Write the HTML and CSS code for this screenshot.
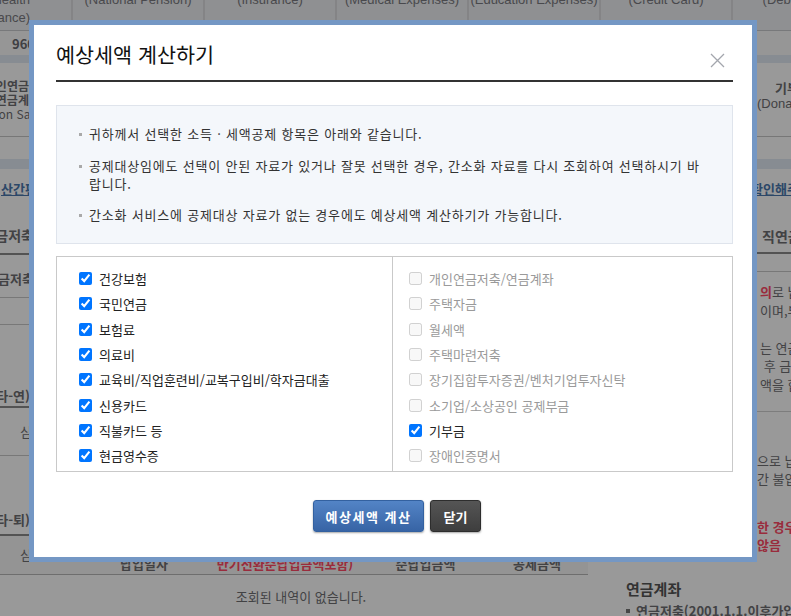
FILE: index.html
```html
<!DOCTYPE html>
<html lang="ko">
<head>
<meta charset="utf-8">
<title>예상세액 계산하기</title>
<link rel="stylesheet" href="styles.css">
</head>
<body>
<div class="page">
  <div class="sumtable">
    <div class="th first"><span>건강보험</span><span>(National Health</span><span>Insurance)</span></div>
    <div class="th">국민연금<br>(National Pension)</div>
    <div class="th">보험료<br>(Insurance)</div>
    <div class="th">의료비<br>(Medical Expenses)</div>
    <div class="th">교육비<br>(Education Expenses)</div>
    <div class="th">신용카드<br>(Credit Card)</div>
    <div class="th last">직불카드<br>(Debit Card)</div>
    <div class="td first">960,000</div>
    <div class="td">0</div>
    <div class="td">0</div>
    <div class="td">0</div>
    <div class="td">0</div>
    <div class="td">0</div>
    <div class="td last">0</div>
  </div>
  <div class="band"></div>
  <div class="subhead">
    <div class="sh-left"><span class="b">개인연금저</span><span class="b">연금계좌</span><span>(Pension Savi</span></div>
    <div class="sh-right"><span class="b k">기부금</span><span>(Donation)</span></div>
  </div>
  <div class="gapwhite"></div>
  <div class="band2"></div>
  <div class="linkrow">
    <a class="lk-left">산간편</a>
    <a class="lk-right">확인해주세요</a>
  </div>
  <div class="main">
    <div class="lcol">
      <div class="l-title"><span>개인연금저축</span></div>
      <div class="l-row1"><span>개인연금저축</span></div>
      <div class="l-row2"></div>
      <div class="l-title2"><span>(기타-연</span></div>
      <div class="l-row3"><span class="sm">심</span></div>
      <div class="l-title3"><span>(기타-퇴</span></div>
      <div class="l-row4">
        <span class="c1">심</span>
        <span class="c2">납입일자</span>
        <span class="c3 red">반기전환순납입금액포함)</span>
        <span class="c4">순납입금액</span>
        <span class="c5">공제금액</span>
      </div>
      <div class="empty">조회된 내역이 없습니다.</div>
    </div>
    <div class="rcol">
      <div class="r-title">직연금</div>
      <div class="r-row"></div>
      <div class="r-text"><span class="red">의</span>로 납입한 금액<br>이며,부담금<br><br>는 연금계좌<br>&nbsp;후 금액<br>액을 합산</div>
      <div class="r-text2">으로 납입<br>간 불입액</div>
      <div class="r-text3"><span class="red">한 경우</span><br><span class="red">않음</span></div>
      <div class="r-sec">연금계좌</div>
      <div class="r-bul">연금저축(2001.1.1.이후가입</div>
    </div>
  </div>
</div>

<div class="overlay"></div>

<div class="modal" role="dialog">
  <div class="modal-head">
    <h1 class="modal-title">예상세액 계산하기</h1>
    <span class="close" aria-label="닫기">
      <svg width="15" height="15" viewBox="0 0 15 15"><path d="M1 1L14 14M14 1L1 14" stroke="#a3a6ad" stroke-width="1.3" fill="none"/></svg>
    </span>
  </div>
  <div class="info">
    <ul>
      <li>귀하께서 선택한 소득 · 세액공제 항목은 아래와 같습니다.</li>
      <li>공제대상임에도 선택이 안된 자료가 있거나 잘못 선택한 경우, 간소화 자료를 다시 조회하여 선택하시기 바랍니다.</li>
      <li>간소화 서비스에 공제대상 자료가 없는 경우에도 예상세액 계산하기가 가능합니다.</li>
    </ul>
  </div>
  <div class="checks">
    <div class="col col-left">
      <label class="row"><input type="checkbox" checked>건강보험</label>
      <label class="row"><input type="checkbox" checked>국민연금</label>
      <label class="row"><input type="checkbox" checked>보험료</label>
      <label class="row"><input type="checkbox" checked>의료비</label>
      <label class="row"><input type="checkbox" checked>교육비/직업훈련비/교복구입비/학자금대출</label>
      <label class="row"><input type="checkbox" checked>신용카드</label>
      <label class="row"><input type="checkbox" checked>직불카드 등</label>
      <label class="row"><input type="checkbox" checked>현금영수증</label>
    </div>
    <div class="col col-right">
      <label class="row off"><input type="checkbox" disabled>개인연금저축/연금계좌</label>
      <label class="row off"><input type="checkbox" disabled>주택자금</label>
      <label class="row off"><input type="checkbox" disabled>월세액</label>
      <label class="row off"><input type="checkbox" disabled>주택마련저축</label>
      <label class="row off"><input type="checkbox" disabled>장기집합투자증권/벤처기업투자신탁</label>
      <label class="row off"><input type="checkbox" disabled>소기업/소상공인 공제부금</label>
      <label class="row"><input type="checkbox" checked>기부금</label>
      <label class="row off"><input type="checkbox" disabled>장애인증명서</label>
    </div>
  </div>
  <div class="buttons">
    <button class="btn btn-blue">예상세액 계산</button>
    <button class="btn btn-dark">닫기</button>
  </div>
</div>
</body>
</html>
```

FILE: styles.css
```css
* { box-sizing: border-box; }
html, body { margin: 0; padding: 0; }
body {
  width: 791px;
  height: 616px;
  overflow: hidden;
  background: #fff;
  font-family: "Noto Sans CJK KR", "Noto Sans", sans-serif;
  font-size: 13px;
  color: #6e6e72;
}

/* ---------- background page ---------- */
.page { width: 791px; overflow: hidden; }
.sumtable {
  display: grid;
  grid-template-columns: 73px repeat(6, 132px);
  margin-top: -27px;
}
.th {
  height: 58px;
  background: #eef0f3;
  border-right: 2px solid #dcdde0;
  border-bottom: 1px solid #c9cacd;
  text-align: center;
  font-family: "Liberation Sans", "Noto Sans CJK KR", sans-serif;
  font-size: 13px;
  line-height: 18px;
  color: #7a7a80;
  white-space: nowrap;
  overflow: hidden;
}
.th.first { display: flex; flex-direction: column; align-items: flex-end; padding-right: 41px; }
.th.first span { display: block; }
.td {
  height: 24px;
  background: #fbfbfb;
  border-right: 1px solid #e2e2e2;
  text-align: center;
  font-weight: bold;
  line-height: 26px;
  color: #6a6a70;
}
.td.first { text-align: left; padding-left: 12px; }
.band { height: 8px; background: #e2e9f4; }
.subhead {
  display: flex;
  justify-content: space-between;
  height: 74px;
  border-bottom: 1px solid #c6c6c6;
  background: #fff;
}
.sh-left {
  width: 40px;
  padding-top: 16px;
  display: flex;
  flex-direction: column;
  align-items: flex-end;
  overflow: hidden;
  white-space: nowrap;
  font-size: 12px;
  line-height: 14px;
}
.sh-left span { display: block; }
.b { font-weight: bold; }
.sh-right {
  width: 34px;
  padding-top: 17px;
  display: flex;
  flex-direction: column;
  white-space: nowrap;
  overflow: hidden;
  line-height: 16px;
  font-family: "Liberation Sans", "Noto Sans CJK KR", sans-serif;
}
.sh-right span { display: block; }
.sh-right .k { padding-left: 18px; font-family: "Noto Sans CJK KR", sans-serif; }
.gapwhite { height: 22px; }
.band2 { height: 10px; background: #e2e9f4; }
.linkrow {
  display: flex;
  justify-content: space-between;
  height: 40px;
  padding-top: 11px;
  font-weight: bold;
  line-height: 18px;
}
.linkrow a { color: #4a77ad; text-decoration: underline; }
.lk-left { padding-left: 1px; }
.lk-right { width: 36px; overflow: hidden; white-space: nowrap; direction: ltr; text-indent: -4px; }

.main {
  display: grid;
  grid-template-columns: 588px 191px;
  column-gap: 12px;
}
.lcol { display: flex; flex-direction: column; }
.lcol > div > span { display: block; }
.l-title, .l-row1, .l-title2, .l-row3, .l-title3 {
  display: flex;
  align-items: flex-end;
  font-weight: bold;
  white-space: nowrap;
  overflow: hidden;
}
.l-title { height: 46px; border-bottom: 2px solid #8a8a8a; padding-bottom: 8px; font-size: 14px; }
.l-title span, .l-row1 span { width: 34px; overflow: hidden; direction: rtl; text-align: left; }
.l-title2 span, .l-title3 span { width: 30px; overflow: hidden; direction: rtl; text-align: left; }
.l-row1 { height: 43px; border-bottom: 1px solid #c9c9c9; padding-bottom: 9px; }
.l-row2 { height: 27px; border-bottom: 1px solid #c9c9c9; }
.l-title2 { height: 83px; border-bottom: 2px solid #8a8a8a; padding-bottom: 1px; }
.l-row3 { height: 48px; border-bottom: 1px solid #c9c9c9; align-items: center; font-weight: normal; }
.sm { padding-left: 20px; }
.l-title3 { height: 80px; border-bottom: 2px solid #8a8a8a; padding-bottom: 5px; }
.l-row4 {
  display: grid;
  grid-template-columns: 83px 122px 160px 121px 1fr;
  height: 39px;
  background: #f7f7f7;
  border-bottom: 1px solid #b8b8b8;
  align-items: end;
  font-weight: bold;
  line-height: 18px;
  padding-bottom: 1px;
}
.l-row4 span { text-align: center; }
.l-row4 .c1 { text-align: left; padding-left: 20px; align-self: center; font-weight: normal; }
.red { color: #ff4a66; }
.empty { padding: 13px 0 0 14px; text-align: center; line-height: 18px; }

.rcol { display: flex; flex-direction: column; }
.r-title {
  height: 45px;
  border-bottom: 2px solid #8a8a8a;
  padding: 17px 0 0 162px;
  font-weight: bold;
  font-size: 14px;
  white-space: nowrap;
  line-height: 20px;
}
.r-row { height: 18px; border-bottom: 1px solid #c9c9c9; }
.r-text {
  padding: 11px 0 0 160px;
  line-height: 18.6px;
  white-space: nowrap;
  height: 140px;
  border-bottom: 1px solid #d0d0d0;
}
.r-text .red { font-weight: bold; }
.r-text2 {
  padding: 40px 0 0 157px;
  line-height: 18px;
  white-space: nowrap;
}
.r-text3 {
  padding: 30px 0 0 157px;
  line-height: 18px;
  white-space: nowrap;
  font-weight: bold;
}
.r-sec { padding: 25px 0 0 26px; font-weight: bold; font-size: 15px; line-height: 20px; color: #555; }
.r-bul { padding: 2px 0 0 26px; font-weight: bold; white-space: nowrap; }
.r-bul::before { content: ""; display: inline-block; width: 4px; height: 4px; background: #777; margin: 0 6px 3px 0; }

.overlay {
  position: fixed;
  inset: 0;
  background: rgba(0, 0, 0, 0.4);
}

/* ---------- modal ---------- */
.modal {
  position: fixed;
  left: 29px;
  top: 20px;
  width: 728px;
  height: 542px;
  border: 5px solid #7497c4;
  background: #fff;
  padding: 0 19px 0 22px;
  color: #222;
}
.modal-head {
  position: relative;
  padding: 17px 0 14px;
  border-bottom: 2px solid #333;
}
.modal-title {
  margin: 0;
  font-size: 20.7px;
  line-height: 24px;
  font-weight: normal;
  color: #111;
}
.close {
  position: absolute;
  right: 8px;
  top: 28px;
  width: 15px;
  height: 15px;
  display: block;
}
.close svg { display: block; }

.info {
  margin-top: 23px;
  border: 1px solid #dfe4ec;
  background: #f4f7fb;
  padding: 19px 20px 19px 22px;
}
.info ul { margin: 0; padding: 0; list-style: none; }
.info li {
  position: relative;
  padding-left: 10px;
  font-size: 13px;
  line-height: 18px;
  letter-spacing: 0.8px;
  color: #333;
  margin-bottom: 13.5px;
}
.info li:last-child { margin-bottom: 0; }
.info li::before {
  content: "";
  position: absolute;
  left: 0;
  top: 8px;
  width: 3px;
  height: 3px;
  background: #a9a9a9;
}

.checks {
  margin-top: 12px;
  border: 1px solid #c9c9c9;
  display: grid;
  grid-template-columns: 336px 1fr;
}
.col { padding: 9px 0 3px; }
.col-left { border-right: 1px solid #c9c9c9; padding-left: 22px; }
.col-right { padding-left: 16px; }
.row {
  display: flex;
  align-items: center;
  height: 25.3px;
  font-size: 13px;
  color: #222;
  white-space: nowrap;
}
.row.off { color: #9a9a9a; }
.row input {
  width: 13px;
  height: 13px;
  margin: 0 7px 0 0;
  flex: none;
}

.buttons {
  margin-top: 28px;
  display: flex;
  justify-content: center;
  gap: 6px;
  padding-left: 5px;
}
.btn {
  height: 32px;
  border-radius: 3px;
  font-family: "Noto Sans CJK KR", sans-serif;
  font-size: 13px;
  font-weight: bold;
  color: #fff;
  padding: 0;
  cursor: pointer;
  box-shadow: 0 1px 2px rgba(0, 0, 0, 0.35);
}
.btn-blue {
  width: 111px;
  letter-spacing: 1.5px;
  background: linear-gradient(#5384c6, #3764a5);
  border: 1px solid #3361a0;
}
.btn-dark {
  width: 51px;
  background: linear-gradient(#555, #3e3e3e);
  border: 1px solid #2d2d2d;
}
```
